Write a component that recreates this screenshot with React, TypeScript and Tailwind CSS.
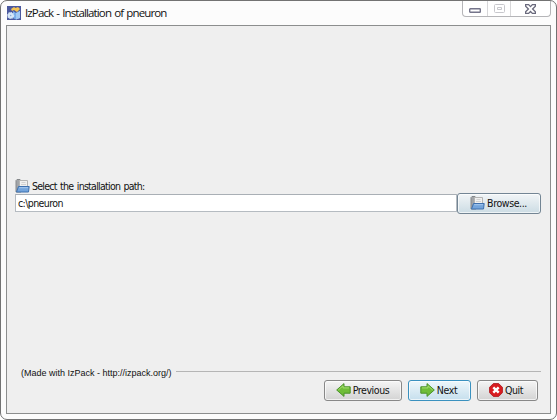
import type { ReactNode } from "react";

function Folder() {
  return (
    <svg width="15" height="14" viewBox="0 0 15 14" className="shrink-0">
      <path d="M1 13V1.5L2 .5h3l1 1V13z" fill="#a2a5a8" stroke="#85888b" />
      <path d="M4.5 1.5h8v8h-8z" fill="#f0f0ef" stroke="#b4b4b3" />
      <path d="M6.5 3.5h4M6 5.5h5" stroke="#d2d2d2" />
      <path d="M3.5 7.5h10.7l-.7 5.5h-12z" fill="#73a4dc" stroke="#3e70ae" />
      <path d="M4.2 8.7h8.8" stroke="#a5c8ee" />
    </svg>
  );
}

function Arrow({ flip = false }: { flip?: boolean }) {
  return (
    <svg width="15" height="14" viewBox="0 0 15 14" className={flip ? "shrink-0 -scale-x-100" : "shrink-0"}>
      <path d="M.7 7 8 .6v3.2h6.2v6.4H8v3.2z" fill="#6fbd38" stroke="#4a922b" strokeLinejoin="round" />
      <path d="M2.3 7 7 2.8v2.1h6" fill="none" stroke="#a5dd70" />
    </svg>
  );
}

function QuitIcon() {
  return (
    <svg width="14" height="14" viewBox="0 0 14 14" className="shrink-0">
      <path d="M4.3.6h5.4l3.7 3.7v5.4l-3.7 3.7H4.3L.6 9.7V4.3z" fill="#d91c20" stroke="#b3262b" strokeLinejoin="round" />
      <path d="m4.3 4.3 5.4 5.4m0-5.4L4.3 9.7" stroke="#fff" strokeWidth="2.4" />
    </svg>
  );
}

function AppIcon() {
  return (
    <svg width="14" height="14" viewBox="0 0 14 14" className="shrink-0">
      <path d="M0 0h14v14H0z" fill="#4a589e" />
      <path d="m6 5 3 2 4-2v7l-4 1.5L6 12z" fill="#79aee9" />
      <path d="m9 7 4-2v7l-4 1.5z" fill="#a3caf4" />
      <path d="m4 3 3-2 1.5 1L11 1l2 2-3 3-3-2-2 1z" fill="#f4c352" />
      <circle cx="3.7" cy="9.5" r="2.8" fill="#d7e7f8" stroke="#d7e7f8" strokeWidth="1.5" strokeDasharray="1.5 .6" />
      <circle cx="3.7" cy="9.5" r=".7" fill="#83a8d5" />
    </svg>
  );
}

function Button({ children, className }: { children: ReactNode; className: string }) {
  return (
    <button className={`flex shrink-0 items-center justify-center rounded-[3px] border bg-linear-to-b whitespace-nowrap shadow-[inset_0_0_0_1px_#ffffffaa] ${className}`}>
      {children}
    </button>
  );
}

export default function App() {
  return (
    <div className="h-[420px] w-[557px] bg-white font-['DejaVu_Sans_Condensed','DejaVu_Sans',sans-serif] text-[10.5px] leading-[14px] text-[#111]">
      <main className="flex h-[420px] w-[557px] flex-col rounded-[7px] border border-[#737373] bg-[#fcfcfc] px-[5px] pb-[5px]">
        <header className="flex h-6 shrink-0 justify-between">
          <div className="flex items-center gap-1 pl-px font-['Open_Sans',sans-serif] text-[11.5px] tracking-[-0.88px] [word-spacing:1px]">
            <AppIcon />
            <h1 className="whitespace-nowrap">IzPack - Installation of pneuron</h1>
          </div>
          <div className="flex h-4 w-[89px] rounded-b-[4px] border border-t-0 border-[#b5b5b8] bg-white">
            <button className="flex w-[25px] items-center justify-center border-r border-[#d7d7d9]" aria-label="Minimize">
              <svg width="12" height="5" viewBox="0 0 12 5" className="mt-[4px]"><rect x=".7" y=".7" width="10.6" height="3.6" rx=".6" fill="#fff" stroke="#74748a" strokeWidth="1.4" /></svg>
            </button>
            <button className="flex w-[23px] items-center justify-center border-r border-[#d7d7d9]" aria-label="Maximize">
              <svg width="11" height="9" viewBox="0 0 11 9" fill="none" stroke="#c7c7cc"><rect x=".5" y=".5" width="10" height="8" rx="1" /><path d="M3.5 3.5h4v2h-4z" /></svg>
            </button>
            <button className="flex flex-1 items-center justify-center" aria-label="Close">
              <svg width="11" height="10" viewBox="0 0 11 10"><path d="M.6.6h3l1.9 2 1.9-2h3v1.7L7.6 5l2.8 2.7v1.7h-3l-1.9-2-1.9 2h-3V7.7L3.4 5 .6 2.3z" fill="#fff" stroke="#69697c" strokeWidth="1.3" /></svg>
            </button>
          </div>
        </header>
        <section className="flex flex-1 flex-col border border-[#8c8e8e] bg-[#efefef] pr-[9px] pl-2">
          <div className="mt-[153px] flex h-[14px] items-center gap-[2px] tracking-[-0.72px] [word-spacing:1px]">
            <Folder />
            <label htmlFor="path">Select the installation path:</label>
          </div>
          <div className="flex h-[20px] items-center">
            <input id="path" defaultValue="c:\pneuron" className="-mt-px h-[18px] min-w-0 flex-1 border border-[#b5bbc1] border-t-[#a9afb5] bg-white px-[2px] tracking-[-0.6px] outline-none" />
            <Button className="h-[21px] w-[84px] gap-[2px] border-[#738594] from-[#f2f5f7] to-[#ccdce4] pr-px tracking-[-0.4px]">
              <Folder />
              <span>Browse...</span>
            </Button>
          </div>
          <footer className="mt-auto h-[47px]">
            <div className="flex h-[10px] items-center gap-1 pl-[6px] font-['Liberation_Sans',sans-serif] text-[9px] leading-[10px]">
              <span className="mt-[3px] whitespace-nowrap">(Made with IzPack - http://izpack.org/)</span>
              <span className="h-px flex-1 bg-[#b5b5b5]" />
            </div>
            <div className="mt-[4px] flex justify-end gap-[6px] pr-[3px] tracking-[-0.4px]">
              <Button className="h-[21px] w-[78px] gap-[2px] border-[#888] from-[#f5f5f5] to-[#d3d3d3] pr-px pb-px"><Arrow /><span>Previous</span></Button>
              <Button className="h-[21px] w-[63px] gap-[2px] border-[#3a91bf] from-[#eef7fb] to-[#c6dfed] pr-[2px] pb-px"><Arrow flip /><span>Next</span></Button>
              <Button className="h-[21px] w-[61px] gap-[2px] border-[#888] from-[#f5f5f5] to-[#d3d3d3] pr-[3px] pb-px"><QuitIcon /><span>Quit</span></Button>
            </div>
          </footer>
        </section>
      </main>
    </div>
  );
}
